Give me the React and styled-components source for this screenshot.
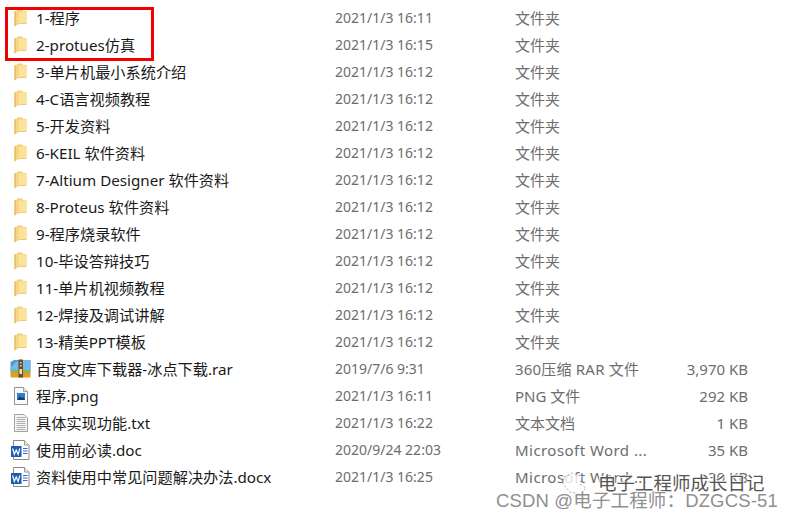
import React from "react";
import styled, { createGlobalStyle } from "styled-components";

const Global = createGlobalStyle`
  html, body { margin: 0; padding: 0; background: #fff; }
  body { width: 793px; height: 520px; overflow: hidden; }
`;
const font = `"Noto Sans", "Noto Sans CJK SC", sans-serif`;

const Page = styled.div`
  position: relative;
  width: 793px;
  height: 520px;
  background: #fff;
  overflow: hidden;
  padding-top: 4px;
  box-sizing: border-box;
  font-family: ${font};
`;
const Row = styled.div`
  display: grid;
  grid-template-columns: 36px 299px 180px 130px 103px;
  height: 27px;
  align-items: center;
  white-space: nowrap;
`;
const IconCell = styled.div`
  display: flex;
  padding-left: ${p => p.$pad}px;
  align-items: center;
`;
const Name = styled.div`
  color: #1a1a1a;
  font-size: 15.2px;
  padding-bottom: 2px;
`;
const DateText = styled.div`
  color: #6d6d6d;
  font-size: 14px;
`;
const TypeText = styled.div`
  color: #6d6d6d;
  font-size: 15px;
  letter-spacing: ${p => p.$ls || 0}px;
`;
const Size = styled.div`
  color: #6d6d6d;
  font-size: 15px;
  text-align: right;
`;
const Highlight = styled.div`
  position: absolute;
  left: 5px;
  top: 7px;
  width: 149px;
  height: 54px;
  border: 3px solid #f00000;
  box-sizing: border-box;
`;
const Watermark = styled.div`
  position: absolute;
  font-family: "Liberation Sans", "Noto Sans CJK SC", sans-serif;
  white-space: nowrap;
  line-height: 1;
  color: ${p => p.$c};
  text-shadow: 1px 0 1px rgba(255,255,255,.85), -1px 0 1px rgba(255,255,255,.85), 0 1px 1px rgba(255,255,255,.85), 0 -1px 1px rgba(255,255,255,.85);
  left: ${p => p.$x}px;
  top: ${p => p.$y}px;
  font-size: ${p => p.$s}px;
  letter-spacing: ${p => p.$ls || 0}px;
`;
const Badge = styled.svg`
  position: absolute;
  left: 560px;
  top: 470px;
`;

const Folder = () => (
  <svg width="13" height="18" viewBox="0 0 13 18" style={{ display: "block" }}>
    <path d="M3 0.5 H8 L9 2 H12.5 V14 H3 Z" fill="#f3cf77" />
    <path d="M4 2.5 H12.5 V14 H4 Z" fill="#fce39a" />
    <path d="M0.5 2.5 L5 0.5 V15 L0.5 17.5 Z" fill="#f6d684" />
    <path d="M0.5 2.5 L1.6 2 V16.9 L0.5 17.5 Z" fill="#e2b352" />
    <path d="M5 14 H12.5 V14.8 H5 Z" fill="#e8bf60" />
  </svg>
);
const Rar = () => (
  <svg width="21" height="19" viewBox="0 0 21 19" style={{ display: "block" }}>
    <path d="M0.5 3 L4 1 H20.5 V12 H0.5 Z" fill="#4a9ddc" />
    <path d="M6 3 L13 1 H20.5 V12 H0.5 V9 Z" fill="#75b8ea" />
    <rect x="0.5" y="11" width="20" height="3" fill="#86bb4a" />
    <rect x="0.5" y="14" width="20" height="4.5" fill="#e8982e" />
    <rect x="8.5" y="0.5" width="4.5" height="18" fill="#6e4b2a" />
    <rect x="10" y="3" width="1.5" height="1.5" fill="#e8d8a8" />
    <rect x="10" y="6" width="1.5" height="1.5" fill="#e8d8a8" />
    <rect x="9.5" y="10" width="2.5" height="5" fill="#f4e4b0" />
  </svg>
);
const Png = () => (
  <svg width="14" height="18" viewBox="0 0 14 18" style={{ display: "block" }}>
    <path d="M.5.5 H9.5 L13.5 4.5 V17.5 H.5 Z" fill="#fbfbfb" stroke="#909090" />
    <path d="M9.5.5 V4.5 H13.5" fill="#e8e8e8" stroke="#a0a0a0" />
    <rect x="3" y="6" width="8" height="7" fill="#2f80cc" />
    <path d="M3 13 L6 9 L8 11 L9.5 10 L11 13 Z" fill="#123f78" />
  </svg>
);
const Txt = () => (
  <svg width="14" height="18" viewBox="0 0 14 18" style={{ display: "block" }}>
    <path d="M.5.5 H10 L13.5 4 V17.5 H.5 Z" fill="#f6f6f6" stroke="#a0a0a0" />
    {[3, 5, 7, 9, 11, 13, 15].map(y => <rect key={y} x="2.5" y={y} width="9" height="1" fill="#b0b0b0" />)}
  </svg>
);
const Word = () => (
  <svg width="19" height="20" viewBox="0 0 19 20" style={{ display: "block" }}>
    <path d="M2.5.5 H13.5 L18 5 V19.5 H2.5 Z" fill="#fff" stroke="#8a8a8a" />
    <path d="M13.5.5 V5 H18" fill="#eee" stroke="#9a9a9a" />
    <rect x="12" y="8" width="4.5" height="1" fill="#2a6cc8" />
    <rect x="12" y="10.5" width="4.5" height="1" fill="#2a6cc8" />
    <rect x="12" y="13" width="4.5" height="1" fill="#2a6cc8" />
    <rect x="0" y="6" width="10.5" height="11" fill="#1d5cb4" />
    <path d="M1.7 8.5 L3.3 14.5 L5.2 10 L7.1 14.5 L8.8 8.5" fill="none" stroke="#fff" strokeWidth="1.2" />
  </svg>
);

const folderNames = [
  ["1-程序", "2021/1/3 16:11"],
  ["2-protues仿真", "2021/1/3 16:15"],
  ["3-单片机最小系统介绍", "2021/1/3 16:12"],
  ["4-C语言视频教程", "2021/1/3 16:12"],
  ["5-开发资料", "2021/1/3 16:12"],
  ["6-KEIL 软件资料", "2021/1/3 16:12"],
  ["7-Altium Designer 软件资料", "2021/1/3 16:12"],
  ["8-Proteus 软件资料", "2021/1/3 16:12"],
  ["9-程序烧录软件", "2021/1/3 16:12"],
  ["10-毕设答辩技巧", "2021/1/3 16:12"],
  ["11-单片机视频教程", "2021/1/3 16:12"],
  ["12-焊接及调试讲解", "2021/1/3 16:12"],
  ["13-精美PPT模板", "2021/1/3 16:12"],
];
const files = [
  [Rar, 10, "百度文库下载器-冰点下载.rar", "2019/7/6 9:31", "360压缩 RAR 文件", "3,970 KB", 0.2],
  [Png, 14, "程序.png", "2021/1/3 16:11", "PNG 文件", "292 KB", 0],
  [Txt, 14, "具体实现功能.txt", "2021/1/3 16:22", "文本文档", "1 KB", 0],
  [Word, 11, "使用前必读.doc", "2020/9/24 22:03", "Microsoft Word ...", "35 KB", 0.45],
  [Word, 11, "资料使用中常见问题解决办法.docx", "2021/1/3 16:25", "Microsoft Word ...", "30 KB", 0.45],
];

export default function App() {
  return (
    <Page>
      <Global />
      {folderNames.map(([n, d]) => (
        <Row key={n}>
          <IconCell $pad={14}><Folder /></IconCell>
          <Name>{n}</Name>
          <DateText>{d}</DateText>
          <TypeText>文件夹</TypeText>
        </Row>
      ))}
      {files.map(([I, pad, n, d, t, s, ls]) => (
        <Row key={n}>
          <IconCell $pad={pad}><I /></IconCell>
          <Name>{n}</Name>
          <DateText>{d}</DateText>
          <TypeText $ls={ls}>{t}</TypeText>
          <Size>{s}</Size>
        </Row>
      ))}
      <Highlight />
      <Badge width="32" height="28" viewBox="0 0 32 28">
        <path d="M4 7 L12 3 L22 6 L20 14 L26 18 L20 24 L10 22 L3 14 Z" fill="#fff" fillOpacity=".8" stroke="#aaa" strokeDasharray="2 2" />
      </Badge>
      <Watermark $x={598} $y={475} $s={18.5} $c="#555">电子工程师成长日记</Watermark>
      <Watermark $x={496} $y={492} $s={18.5} $ls={0.15} $c="#8f8f8f">CSDN @电子工程师：DZGCS-51</Watermark>
    </Page>
  );
}
